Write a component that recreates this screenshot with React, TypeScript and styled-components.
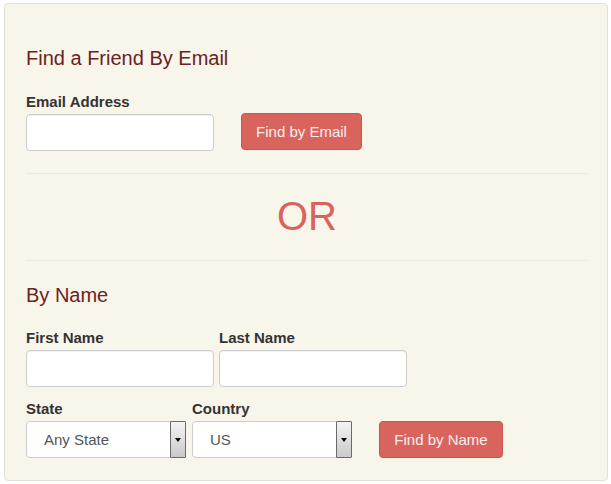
import React from "react";
import styled, { createGlobalStyle } from "styled-components";

const Global = createGlobalStyle`
  html, body { margin: 0; padding: 0; background: #ffffff; }
  body { font-family: "Liberation Sans", Arial, sans-serif; }
`;

const Page = styled.div`
  padding: 3px 4px 0 4px;
`;

const Panel = styled.div`
  box-sizing: border-box;
  width: 604px;
  height: 478px;
  background: #f8f5ea;
  border: 1px solid #e3e0d4;
  border-radius: 4px;
  padding: 42px 19px 0 21px;
`;

const Heading = styled.h2<{ $top?: number }>`
  margin: 0;
  font-size: 20px;
  line-height: 24px;
  font-weight: normal;
  color: #6a2222;
  margin-top: ${(p) => p.$top ?? 0}px;
`;

const Row = styled.div<{ $gap: number; $top: number }>`
  display: flex;
  align-items: flex-end;
  gap: ${(p) => p.$gap}px;
  margin-top: ${(p) => p.$top}px;
`;

const Field = styled.div`
  display: flex;
  flex-direction: column;
`;

const Label = styled.label`
  font-size: 15px;
  line-height: 20px;
  font-weight: bold;
  color: #333333;
  margin-bottom: 2px;
`;

const Input = styled.input<{ $w: number }>`
  box-sizing: border-box;
  width: ${(p) => p.$w}px;
  height: 37px;
  background: #ffffff;
  border: 1px solid #cccccc;
  border-radius: 4px;
  box-shadow: inset 0 1px 1px rgba(0, 0, 0, 0.06);
  outline: none;
  padding: 0 12px;
  font-family: inherit;
  font-size: 15px;
`;

const SelectBox = styled.div<{ $w: number }>`
  box-sizing: border-box;
  width: ${(p) => p.$w}px;
  height: 37px;
  background: #ffffff;
  border: 1px solid #cccccc;
  border-radius: 4px;
  display: flex;
  align-items: center;
  padding-left: 17px;
  font-size: 15px;
  color: #555555;
`;

const SelectText = styled.span`
  flex: 1;
`;

const ArrowButton = styled.span`
  box-sizing: border-box;
  width: 16px;
  height: 37px;
  margin: -1px -1px -1px 0;
  border: 1px solid #6a6a6a;
  border-radius: 1px;
  background: linear-gradient(#f4f4f4, #c9c9c9);
  display: flex;
  align-items: center;
  justify-content: center;
  &::after {
    content: "";
    width: 0;
    height: 0;
    border-left: 3px solid transparent;
    border-right: 3px solid transparent;
    border-top: 4px solid #000000;
  }
`;

const Button = styled.button<{ $w: number; $left?: number; $bottom?: number }>`
  box-sizing: border-box;
  width: ${(p) => p.$w}px;
  height: 37px;
  margin-left: ${(p) => p.$left ?? 0}px;
  margin-bottom: ${(p) => p.$bottom ?? 0}px;
  background: #d9645e;
  border: 1px solid #c9554f;
  border-radius: 4px;
  color: #fbeeee;
  font-family: inherit;
  font-size: 15px;
  padding: 0;
  cursor: pointer;
`;

const Rule = styled.hr<{ $top: number }>`
  margin: ${(p) => p.$top}px 0 0 0;
  border: 0;
  border-top: 1px solid #ede9dc;
  width: 561px;
`;

const Or = styled.div`
  text-align: center;
  font-size: 40px;
  line-height: 44px;
  color: #d9645e;
  margin-top: 20px;
`;

export default function App() {
  return (
    <>
      <Global />
      <Page>
        <Panel>
          <Heading>Find a Friend By Email</Heading>
          <Row $gap={27} $top={22}>
            <Field>
              <Label>Email Address</Label>
              <Input $w={188} type="text" />
            </Field>
            <Button $w={121} $bottom={1}>Find by Email</Button>
          </Row>
          <Rule $top={22} />
          <Or>OR</Or>
          <Rule $top={22} />
          <Heading $top={22}>By Name</Heading>
          <Row $gap={5} $top={21}>
            <Field>
              <Label>First Name</Label>
              <Input $w={188} type="text" />
            </Field>
            <Field>
              <Label>Last Name</Label>
              <Input $w={188} type="text" />
            </Field>
          </Row>
          <Row $gap={6} $top={12}>
            <Field>
              <Label>State</Label>
              <SelectBox $w={160}>
                <SelectText>Any State</SelectText>
                <ArrowButton />
              </SelectBox>
            </Field>
            <Field>
              <Label>Country</Label>
              <SelectBox $w={160}>
                <SelectText>US</SelectText>
                <ArrowButton />
              </SelectBox>
            </Field>
            <Button $w={124} $left={21}>Find by Name</Button>
          </Row>
        </Panel>
      </Page>
    </>
  );
}
